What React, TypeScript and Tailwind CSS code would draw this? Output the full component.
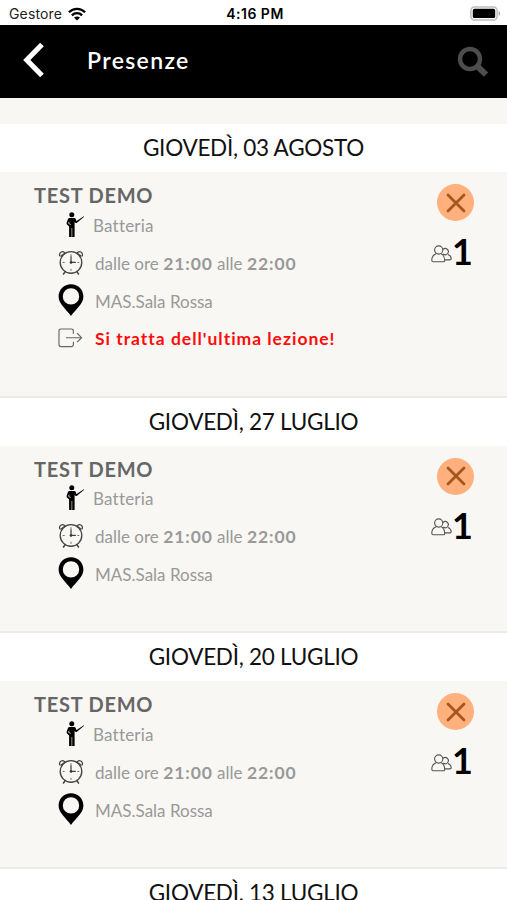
import type { ReactNode } from "react";

interface Lesson {
  date: string;
  title: string;
  subject: string;
  from: string;
  to: string;
  room: string;
  count: number;
  note?: string;
}

const lessons: Lesson[] = [
  {
    date: "GIOVEDÌ, 03 AGOSTO",
    title: "TEST DEMO",
    subject: "Batteria",
    from: "21:00",
    to: "22:00",
    room: "MAS.Sala Rossa",
    count: 1,
    note: "Si tratta dell'ultima lezione!",
  },
  { date: "GIOVEDÌ, 27 LUGLIO", title: "TEST DEMO", subject: "Batteria", from: "21:00", to: "22:00", room: "MAS.Sala Rossa", count: 1 },
  { date: "GIOVEDÌ, 20 LUGLIO", title: "TEST DEMO", subject: "Batteria", from: "21:00", to: "22:00", room: "MAS.Sala Rossa", count: 1 },
];

function WifiIcon() {
  return (
    <svg className="h-[14px] w-[18px]" viewBox="0 0 18 14" fill="none" stroke="#000" strokeWidth={2.3}>
      <path d="M0.9 5.3C5.5 0.6 12.5 0.6 17.1 5.3" />
      <path d="M3.9 8.3C6.8 5.5 11.2 5.5 14.1 8.3" />
      <path d="M9 13.6L6 10.6C7.7 9.1 10.3 9.1 12 10.6Z" fill="#000" stroke="none" />
    </svg>
  );
}

function BatteryIcon() {
  return (
    <svg className="h-[15px] w-[31px]" viewBox="0 0 31 15">
      <rect x="0.9" y="0.9" width="26.2" height="13" rx="3.6" fill="#fff" stroke="#bdbdbd" strokeWidth="1.5" />
      <rect x="2.8" y="2.8" width="22.4" height="9.2" rx="1.6" fill="#000" />
      <path d="M28.6 5C30.6 5.6 30.6 9.2 28.6 9.8Z" fill="#a8a8a8" />
    </svg>
  );
}

function TeacherIcon() {
  return (
    <svg className="-mt-[2px] h-[26px] w-[20px]" viewBox="0 0 20 26">
      <circle cx="6.8" cy="2.8" r="2.5" />
      <path d="M4.3 6H9.3C10.6 6 10.9 7 11 8.2L11.6 9L18.8 4.3L19.1 4.8L12 10.8C11 11.5 10 10.6 9.6 9.8V25H7.2V16H6.6V25H4.1V14.5L1.8 12.2C1.4 11.6 1.5 10.9 1.8 10.2L3 7C3.3 6.3 3.7 6 4.3 6Z" />
      <path d="M4.1 9.8L3.5 11.3L5.7 12.5" fill="none" stroke="#f8f7f3" strokeWidth="0.8" />
    </svg>
  );
}

function ClockIcon() {
  return (
    <svg className="-mt-[2px] h-[26px] w-[26px]" viewBox="0 0 26 27" fill="none" stroke="#444" strokeWidth={1.3} strokeLinecap="round">
      <circle cx="13" cy="14" r="11.2" strokeWidth="1.4" />
      <path d="M1.4 7.2A3 3 0 1 1 6.9 4.6" />
      <path d="M24.6 7.2A3 3 0 1 0 19.1 4.6" />
      <path d="M2.6 7.4L7 4.2M23.4 7.4L19 4.2" />
      <path d="M7 23.5L5.2 26M19 23.5L20.8 26" strokeWidth="1.6" />
      <path d="M13 5.8V7M13 21V22.2M4.8 14H6M20 14H21.2" strokeWidth="0.8" />
      <path d="M13 8V14H17.5" strokeWidth="1.3" />
      <circle cx="13" cy="14" r="1.4" fill="#333" stroke="none" />
    </svg>
  );
}

function PinIcon() {
  return (
    <svg className="-mt-[2px] h-[32px] w-[26px]" viewBox="0 0 26 32">
      <path
        fillRule="evenodd"
        d="M13 0.3C20 0.3 25.4 5.7 25.4 12.4C25.4 19.8 18.2 24.6 13 31.9C7.8 24.6 0.6 19.8 0.6 12.4C0.6 5.7 6 0.3 13 0.3ZM13 4.2A8.2 8.2 0 1 0 13 20.6A8.2 8.2 0 1 0 13 4.2Z"
      />
    </svg>
  );
}

function ExitIcon() {
  return (
    <svg className="h-[20px] w-[25px]" viewBox="0 0 26 21" fill="none" stroke="#666" strokeWidth={1.2}>
      <path d="M16 6V3.2C16 1.8 15.2 1 13.8 1H3.1C1.7 1 .9 1.8 .9 3.2V16.8C.9 18.6 1.7 19.6 3.1 19.6H13.8C15.2 19.6 16 18.8 16 17.4V14.5" />
      <path d="M8.3 10.2H24.4M20 5.5L24.6 10.2L20 14.9" />
    </svg>
  );
}

function PeopleIcon() {
  return (
    <svg className="h-[18px] w-[21px]" viewBox="0 0 21 18" fill="none" stroke="#555" strokeWidth={1.1} strokeLinejoin="round">
      <circle cx="7.7" cy="5" r="4.1" />
      <path d="M5.2 8.8C2.4 9.8 .8 11.8 .8 15.2C.8 16.4 1.2 16.8 2.2 16.8H12.4C13.4 16.8 13.8 16.2 13.7 15C13.5 11.8 12.6 9.8 10 8.8" />
      <path d="M12 4.5A3.1 3.1 0 1 1 12.6 9.3L11.8 9.8" />
      <path d="M17 9.5C19.2 10.4 20.2 11.8 20.2 13.6C20.2 14.5 19.8 14.9 19 14.9H13.8" />
    </svg>
  );
}

function Row({ icon, className = "", children }: { icon: ReactNode; className?: string; children: ReactNode }) {
  return (
    <div className="flex h-[37.7px] items-center">
      <div className="flex w-[26px]">{icon}</div>
      <span className={`ml-[11.5px] whitespace-nowrap pt-[2px] ${className || "text-[17px]"}`}>{children}</span>
    </div>
  );
}

function DateHeading({ children }: { children: ReactNode }) {
  return (
    <h2 className="flex h-[48px] items-center justify-center bg-white text-[22.5px] leading-[34px] tracking-[-0.27px] text-[#111]">
      {children}
    </h2>
  );
}

function LessonCard({ lesson }: { lesson: Lesson }) {
  return (
    <section>
      <DateHeading>{lesson.date}</DateHeading>
      <div
        className={`flex justify-between border-b-2 border-[#ecebe8] bg-[#f8f7f3] pl-[34px] pr-[33px] pt-[12px] ${
          lesson.note ? "h-[225.5px]" : "h-[187.75px]"
        }`}
      >
        <div className="text-[#999]">
          <h3 className="-mt-px text-[20px] font-bold leading-[24px] tracking-[0.75px] text-[#666]">{lesson.title}</h3>
          <div className="flex h-[37px] items-center pl-[31px]">
            <TeacherIcon />
            <span className="ml-[8px] text-[17px] tracking-[0.2px]">{lesson.subject}</span>
          </div>
          <div className="pl-[23.5px]">
            <Row icon={<ClockIcon />}>
              dalle ore <b className="text-[17.5px] tracking-[0.9px]">{lesson.from}</b> alle{" "}
              <b className="text-[17.5px] tracking-[0.9px]">{lesson.to}</b>
            </Row>
            <Row icon={<PinIcon />}>{lesson.room}</Row>
            {lesson.note && (
              <Row icon={<ExitIcon />} className="text-[17.5px] font-bold tracking-[0.98px] text-[#fb0d0d]">
                {lesson.note}
              </Row>
            )}
          </div>
        </div>
        <div className="flex flex-col items-end">
          <div className="flex size-[37px] items-center justify-center rounded-full bg-[#ffb07c]">
            <svg className="size-[20px]" viewBox="0 0 20 20" stroke="#a3571c" strokeWidth={2.8} strokeLinecap="round">
              <path d="M2 2L18 18M18 2L2 18" />
            </svg>
          </div>
          <div className="mt-[10px] flex items-center pr-px">
            <div className="pt-[5px]">
              <PeopleIcon />
            </div>
            <span className="text-[36px] font-bold leading-[40px] text-black">{lesson.count}</span>
          </div>
        </div>
      </div>
    </section>
  );
}

export default function App() {
  return (
    <div className="h-[900px] w-full overflow-hidden bg-[#f8f7f3] font-[Lato,sans-serif]">
      <div className="grid h-[25px] grid-cols-3 items-center bg-white pl-[9px] pr-[6px] font-[Inter,sans-serif] text-[14px] text-black">
        <div className="flex items-center gap-[6px] pt-[2px] text-[#222]">
          <span className="tracking-[0.15px]">Gestore</span>
          <WifiIcon />
        </div>
        <div className="whitespace-nowrap pt-[2px] text-center text-[14px] font-semibold tracking-[0.5px]">4:16 PM</div>
        <div className="flex justify-end pt-px">
          <BatteryIcon />
        </div>
      </div>

      <header className="flex h-[73px] items-center bg-black pl-[23px] pr-[19px] text-white">
        <svg className="-mt-1 h-[36px] w-[22px]" viewBox="0 0 22 36" fill="none" stroke="#fff" strokeWidth={5.2}>
          <path d="M19 2.5L3.8 18L19 33.5" />
        </svg>
        <h1 className="-mt-[3px] ml-[42px] text-[23px] font-semibold tracking-[1.35px]">Presenze</h1>
        <svg className="ml-auto h-[31px] w-[31px]" viewBox="0 0 31 31" fill="none" stroke="#4d4d4d">
          <circle cx="13" cy="13" r="10" strokeWidth="4.4" />
          <path d="M20 20L29 28.5" strokeWidth="6" />
        </svg>
      </header>

      <main className="pt-[26px]">
        {lessons.map((lesson) => (
          <LessonCard key={lesson.date} lesson={lesson} />
        ))}
        <DateHeading>GIOVEDÌ, 13 LUGLIO</DateHeading>
      </main>
    </div>
  );
}
